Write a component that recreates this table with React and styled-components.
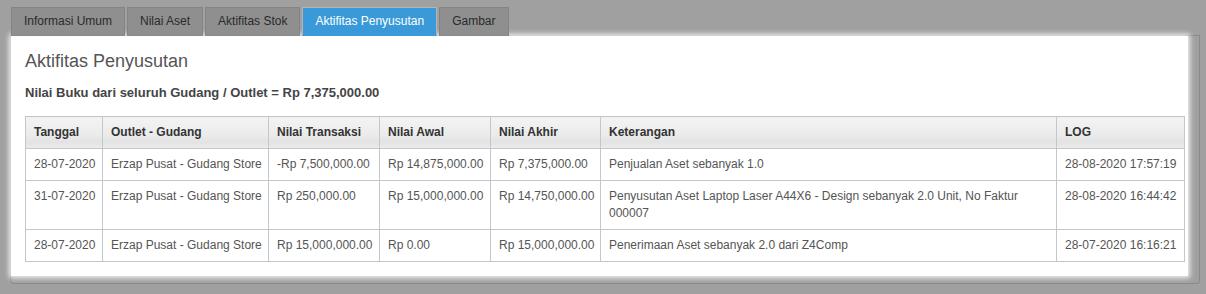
import React from "react";
import styled, { createGlobalStyle } from "styled-components";

const Global = createGlobalStyle`
  html, body { margin: 0; padding: 0; background: #a0a0a0; }
  body { font-family: "Liberation Sans", Arial, sans-serif; font-size: 12px; }
`;

const Wrapper = styled.div`
  padding: 7px 6px 9px 10px;
`;

const Tabs = styled.ul`
  display: flex;
  list-style: none;
  margin: 0;
  padding: 0 0 0 1px;
  border-bottom: 1px solid #8a8a8a;
`;

const Tab = styled.li`
  margin-right: 2px;
  margin-bottom: -1px;
  padding: 5px 12px;
  line-height: 17px;
  font-size: 12px;
  border: 1px solid ${(p) => (p.$active ? "#b4b4b4" : "#848484")};
  border-bottom: ${(p) => (p.$active ? "1px solid #3a9ad9" : "1px solid #8a8a8a")};
  background: ${(p) => (p.$active ? "#3a9ad9" : "#8f8f8f")};
  color: ${(p) => (p.$active ? "#ffffff" : "#2a2a2a")};
  border-radius: 1px 1px 0 0;
  white-space: nowrap;
`;

const Pane = styled.div`
  border: 1px solid #8a8a8a;
  border-top: none;
  border-radius: 0 0 4px 4px;
  padding: 0 11px 7px 0;
`;

const Highlight = styled.section`
  background: #ffffff;
  box-shadow: 0 0 5px 2px rgba(255, 255, 255, 0.85);
  padding: 15px 3px 14px 14px;
`;

const Title = styled.h3`
  margin: 0 0 13px;
  font-size: 18px;
  line-height: 20px;
  font-weight: normal;
  color: #555555;
`;

const Summary = styled.p`
  margin: 0 0 15px;
  font-size: 13px;
  line-height: 17px;
  font-weight: bold;
  color: #444444;
`;

const Table = styled.table`
  width: 1159px;
  border-collapse: collapse;
  table-layout: fixed;
  font-size: 12px;
`;

const Col = styled.col`
  width: ${(p) => p.$w}px;
`;

const Th = styled.th`
  text-align: left;
  font-weight: bold;
  color: #333333;
  padding: 7px 4px 7px 8px;
  line-height: 17px;
  white-space: nowrap;
  border: 1px solid #c3c6ca;
  background: linear-gradient(#f4f4f4 0%, #ebebeb 55%, #e3e3e3 80%, #ececec 100%);
`;

const Td = styled.td`
  vertical-align: top;
  color: #555555;
  padding: 7px 4px 7px 8px;
  line-height: 17px;
  white-space: ${(p) => (p.$wrap ? "normal" : "nowrap")};
  border: 1px solid #c3c6ca;
`;

const widths = [77, 166, 111, 111, 110, 456, 128];
const heads = ["Tanggal", "Outlet - Gudang", "Nilai Transaksi", "Nilai Awal", "Nilai Akhir", "Keterangan", "LOG"];
const rows = [
  ["28-07-2020", "Erzap Pusat - Gudang Store", "-Rp 7,500,000.00", "Rp 14,875,000.00", "Rp 7,375,000.00", "Penjualan Aset sebanyak 1.0", "28-08-2020 17:57:19"],
  ["31-07-2020", "Erzap Pusat - Gudang Store", "Rp 250,000.00", "Rp 15,000,000.00", "Rp 14,750,000.00", "Penyusutan Aset Laptop Laser A44X6 - Design sebanyak 2.0 Unit, No Faktur 000007", "28-08-2020 16:44:42"],
  ["28-07-2020", "Erzap Pusat - Gudang Store", "Rp 15,000,000.00", "Rp 0.00", "Rp 15,000,000.00", "Penerimaan Aset sebanyak 2.0 dari Z4Comp", "28-07-2020 16:16:21"],
];
const tabs = ["Informasi Umum", "Nilai Aset", "Aktifitas Stok", "Aktifitas Penyusutan", "Gambar"];

export default function App() {
  return (
    <>
      <Global />
      <Wrapper>
        <Tabs>
          {tabs.map((t, i) => (
            <Tab key={t} $active={i === 3}>{t}</Tab>
          ))}
        </Tabs>
        <Pane>
          <Highlight>
            <Title>Aktifitas Penyusutan</Title>
            <Summary>Nilai Buku dari seluruh Gudang / Outlet = Rp 7,375,000.00</Summary>
            <Table>
              <colgroup>
                {widths.map((w, i) => (
                  <Col key={i} $w={w} />
                ))}
              </colgroup>
              <thead>
                <tr>
                  {heads.map((h) => (
                    <Th key={h}>{h}</Th>
                  ))}
                </tr>
              </thead>
              <tbody>
                {rows.map((r, i) => (
                  <tr key={i}>
                    {r.map((c, j) => (
                      <Td key={j} $wrap={j === 5}>{c}</Td>
                    ))}
                  </tr>
                ))}
              </tbody>
            </Table>
          </Highlight>
        </Pane>
      </Wrapper>
    </>
  );
}
